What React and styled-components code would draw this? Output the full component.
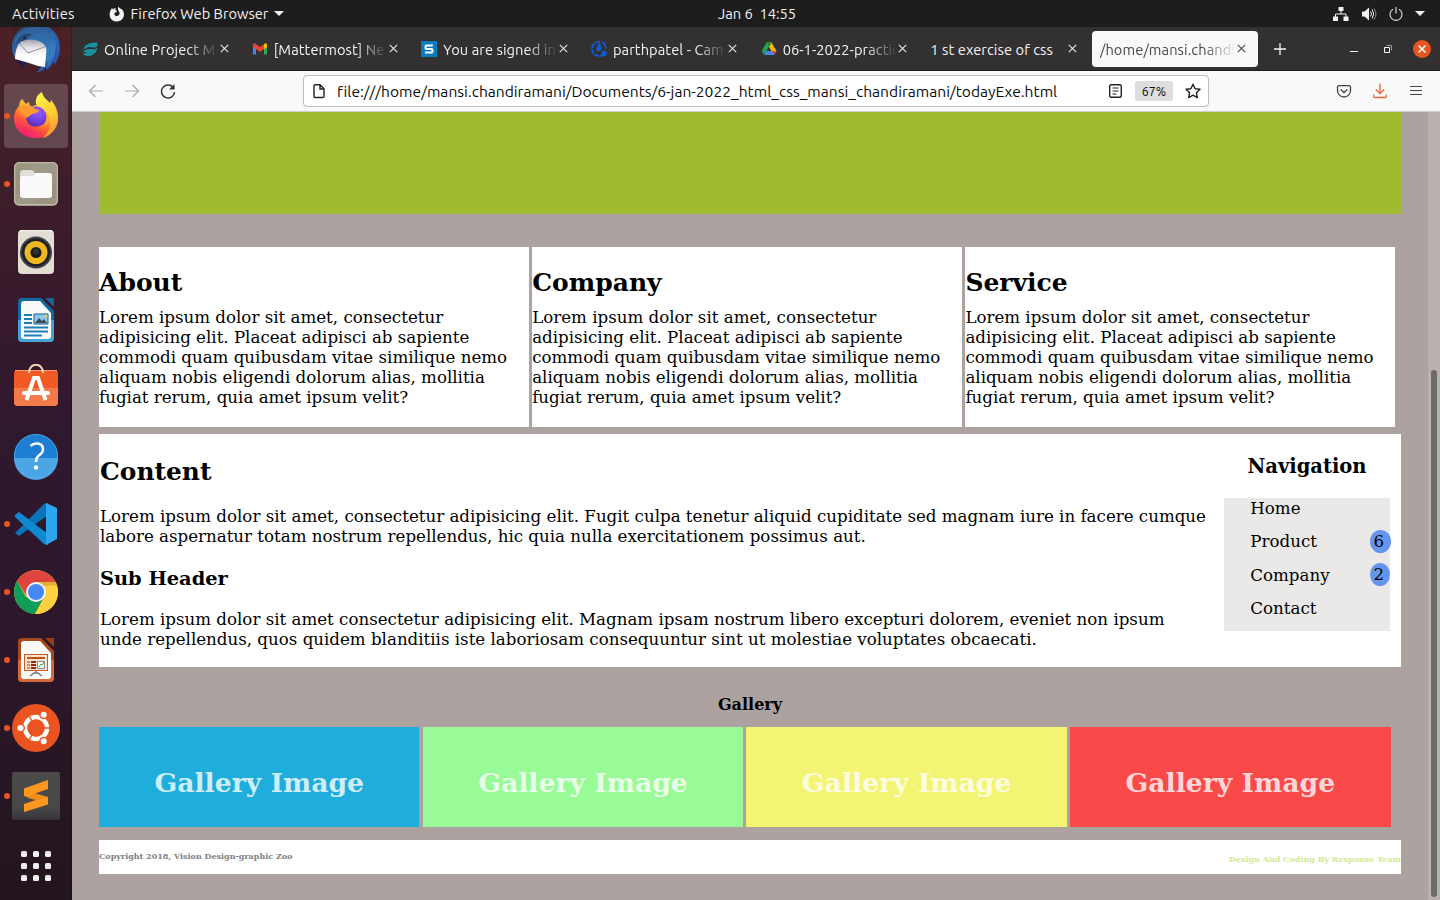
import React from "react";
import styled, { createGlobalStyle } from "styled-components";

const GlobalStyle = createGlobalStyle`
  * { box-sizing: border-box; }
  html, body { margin: 0; padding: 0; }
  body { width: 1440px; height: 900px; overflow: hidden; background: #aca2a0; }
  h1, h2, h3, p, ul { margin: 0; padding: 0; }
  ul { list-style: none; }
`;

const uiFont = `Ubuntu, "Noto Sans", "Open Sans", sans-serif`;
const pageFont = `"DejaVu Serif", serif`;

const Desktop = styled.div`
  display: grid;
  grid-template: 27px 873px / 72px 1368px;
  width: 1440px;
  height: 900px;
  overflow: hidden;
  font-family: ${uiFont};
  font-variant-ligatures: none;
`;

const TopBar = styled.header`
  grid-column: 1 / 3;
  display: grid;
  grid-template-columns: 718px auto 1fr;
  align-items: center;
  background: #1d1d1d;
  color: #f2f2f2;
  font-size: 14.67px;
  line-height: 27px;
  white-space: pre;
`;
const BarGroup = styled.div`
  display: flex;
  align-items: center;
  height: 27px;
  gap: ${(p) => (p.$end ? "12px" : "0")};
  justify-content: ${(p) => (p.$end ? "flex-end" : "flex-start")};
  padding: ${(p) => (p.$end ? "0 15px 0 0" : "0 0 0 12px")};
`;
const Label = styled.span`
  letter-spacing: ${(p) => p.$track || 0}px;
  white-space: pre;
`;
const AppMenu = styled.div`
  display: flex;
  align-items: center;
  gap: 6px;
  margin-left: 34px;
`;

const Dock = styled.nav`
  display: flex;
  flex-direction: column;
  align-items: center;
  overflow: hidden;
  height: 873px;
  background: linear-gradient(180deg, #4b2124 0, #42202a 90px, #3a1b2b 230px, #30182d 400px, #2c172b 600px, #23151e 873px);
  box-shadow: inset -1px 0 0 rgba(0, 0, 0, 0.22);
`;
const DockItem = styled.div`
  position: relative;
  flex: none;
  display: flex;
  align-items: center;
  justify-content: center;
  width: 64px;
  height: 64px;
  margin-bottom: 4px;
  border-radius: 4px;
  background: ${(p) => (p.$active ? "rgba(255,255,255,0.18)" : "transparent")};
  &:first-child { margin-top: -11px; }
  &:last-child { margin-top: 2px; }
  svg { display: block; }
`;
const RunningDot = styled.i`
  position: absolute;
  left: 0;
  top: 29px;
  width: 6px;
  height: 6px;
  border-radius: 50%;
  background: #e95420;
`;

const Browser = styled.main`
  display: grid;
  grid-template-rows: 44px 41px 788px;
  min-width: 0;
`;
const TabStrip = styled.div`
  display: flex;
  align-items: center;
  padding: 0 9px 0 2px;
  background: #333031;
  border-bottom: 1px solid #1f1d1e;
`;
const TabBox = styled.div`
  display: flex;
  align-items: center;
  width: 166px;
  flex: none;
  height: 36px;
  margin-right: 3.67px;
  padding: 0 11.5px 0 8px;
  border-radius: 4px;
  background: ${(p) => (p.$selected ? "#f9f9f9" : "transparent")};
  color: ${(p) => (p.$selected ? "#4a4748" : "#f3f3f3")};
  font-size: 14.67px;
  > svg { flex: none; }
`;
const TabTitle = styled.span`
  flex: 1;
  min-width: 0;
  overflow: hidden;
  white-space: pre;
  line-height: 24px;
  margin: 2px 1px 0 ${(p) => (p.$icon ? 6 : 0)}px;
  letter-spacing: 0.07px;
  mask-image: ${(p) => (p.$fade ? "linear-gradient(to left, transparent 0, black 32px)" : "none")};
`;
const NewTab = styled.div`
  display: flex;
  margin-left: 2px;
`;
const WindowControls = styled.div`
  display: flex;
  align-items: center;
  margin-left: auto;
  gap: 21px;
  svg:first-child { margin-right: 5px; }
`;

const Toolbar = styled.div`
  display: grid;
  grid-template-columns: 231px 906px 1fr;
  align-items: center;
  background: #f9f9f9;
  border-bottom: 1px solid #cfcdce;
`;
const NavButtons = styled.div`
  display: flex;
  gap: 20px;
  padding-left: 16px;
`;
const UrlField = styled.div`
  display: flex;
  align-items: center;
  height: 32px;
  padding: 0 7px 0 7px;
  border: 1px solid #bebdbe;
  border-radius: 4px;
  background: #fff;
  color: #0c0c0d;
  font-size: 15.6px;
`;
const UrlText = styled.span`
  flex: 1;
  margin-left: 10px;
  line-height: 18px;
  white-space: pre;
`;
const ZoomBadge = styled.span`
  width: 38px;
  height: 20px;
  margin: 0 12px;
  border-radius: 3px;
  background: #dedede;
  font-size: 12.4px;
  line-height: 20px;
  text-align: center;
`;
const Tools = styled.div`
  display: flex;
  justify-content: flex-end;
  gap: 20px;
  padding-right: 16px;
`;

const Viewport = styled.section`
  display: grid;
  grid-template-columns: 1356px 12px;
  background: #aca2a0;
  color: #000;
  font-family: ${pageFont};
`;
const Page = styled.div`
  width: 1329px;
  padding-left: 27px;
`;
const Track = styled.div`
  padding: 258px 3px 0;
  background: #bab0b1;
`;
const Thumb = styled.div`
  height: 527px;
  border-radius: 3px;
  background: #6d6c6c;
`;
const Banner = styled.div`
  height: 102px;
  background: #9fbc2e;
`;
const CardRow = styled.div`
  display: flex;
  gap: 3.2px;
  margin-top: 33px;
`;
const Card = styled.article`
  width: 430px;
  height: 180px;
  padding-top: 21px;
  background: #fff;
`;
const Heading = styled.h2`
  font-size: ${(p) => p.$size}px;
  line-height: ${(p) => p.$line}px;
  text-align: ${(p) => p.$align || "left"};
  font-weight: bold;
  white-space: nowrap;
`;
const GalleryHeading = styled(Heading)`
  margin-top: 28px;
`;
const Paragraph = styled.p`
  margin-top: ${(p) => p.$gap}px;
  font-size: 16.67px;
  line-height: 20px;
  white-space: nowrap;
`;
const ContentPanel = styled.div`
  display: flex;
  justify-content: space-between;
  height: 233px;
  margin-top: 7px;
  padding: 0 11px 0 1px;
  background: #fff;
`;
const Article = styled.div`
  padding-top: 23px;
`;
const Aside = styled.aside`
  width: 166px;
  padding-top: 21px;
`;
const NavList = styled.ul`
  height: 133px;
  margin-top: 19px;
  padding-top: 1px;
  background: #eae9e7;
`;
const NavItem = styled.li`
  display: flex;
  justify-content: space-between;
  height: 33.33px;
  padding-left: 26.3px;
  font-size: 16.67px;
  line-height: 20px;
`;
const Count = styled.span`
  width: ${(p) => p.$w}px;
  height: 23px;
  margin: -2.3px ${(p) => 20 - p.$w}px 0 0;
  padding-left: 3.6px;
  border-radius: 50%;
  background: #6495ed;
  line-height: 23px;
`;
const Gallery = styled.div`
  display: flex;
  gap: 3.22px;
  margin-top: 12px;
`;
const Tile = styled.div`
  width: 320.49px;
  height: 100px;
  padding-top: 40px;
  background: ${(p) => p.$color};
  color: rgba(255, 255, 255, 0.8);
`;
const Footer = styled.footer`
  display: flex;
  justify-content: space-between;
  height: 34px;
  margin-top: 13px;
  background: #fff;
  font-size: 8px;
  font-weight: bold;
  line-height: 10px;
`;
const Credit = styled.span`
  padding-top: ${(p) => p.$top}px;
  color: ${(p) => p.$color};
`;

const Svg = ({ w = 16, h, box, children, ...rest }) => (
  <svg width={w} height={h || w} viewBox={box || `0 0 ${w} ${h || w}`} fill="none" {...rest}>{children}</svg>
);

const Thunderbird = () => (
  <Svg w={48}>
    <defs>
      <linearGradient id="tb" x1="0" y1="0" x2="1" y2="1"><stop stopColor="#29517f" /><stop offset=".5" stopColor="#2c6fb6" /><stop offset="1" stopColor="#2b48a8" /></linearGradient>
      <linearGradient id="tbe" x1="0" y1="0" x2="0" y2="1"><stop stopColor="#8d8d95" /><stop offset=".35" stopColor="#e4e4e8" /><stop offset=".6" stopColor="#fff" /></linearGradient>
      <linearGradient id="tbs" x1="0" y1="0" x2="0" y2="1"><stop stopColor="#2a1620" stopOpacity=".5" /><stop offset="1" stopColor="#2a1620" stopOpacity="0" /></linearGradient>
    </defs>
    <path d="M4 32c1 6 3 9 9 12l-2-5 4 2-3-6z" fill="#231957" />
    <path d="M24 0C39 0 48 11 48 24c0 8-3 13-6 17v-4c-3 5-5 8-8 9v-3c-2 3-5 5-9 5l4-5c2-8 3-14 4-20L10 17 3 34C1 31 0 27 0 23 0 10 10 0 24 0z" fill="url(#tb)" />
    <path d="M9 16q8-5 16-1l10 7-2 21q-9-1-16-4L3 35q0-11 6-19z" fill="url(#tbe)" />
    <path d="M7 19l9 10 19-7" stroke="#8e8e96" strokeWidth="1" />
    <path d="M3 17C7 6 15 2 26 3c12 1 19 10 18 21-1 9-4 15-9 20l1-7-3 4c2-7 3-13 1-18-3-6-12-9-20-7-3 0-5 2-7 4z" fill="#3171b4" />
    <path d="M36 22c1 6 0 11-2 15m5-17c1 6 0 11-3 17m6-17c0 7-1 10-3 14" stroke="#4590d2" strokeWidth=".9" />
    <path d="M4 18C7 11 13 8 20 10c-3 2-4 5-9 7-3 0-5 2-7 4z" fill="#274f7d" />
    <circle cx="12.500" cy="14" r="1.300" fill="#12213c" />
    <path d="M0 0h48v18H0z" fill="url(#tbs)" opacity=".5" />
  </Svg>
);
const Firefox = () => (
  <Svg w={48}>
    <defs>
      <linearGradient id="ff" x1=".8" y1="0" x2=".25" y2="1"><stop stopColor="#fff44f" /><stop offset=".35" stopColor="#ffb22d" /><stop offset=".65" stopColor="#ff5a35" /><stop offset="1" stopColor="#f0147a" /></linearGradient>
      <radialGradient id="ffp" cx=".6" cy=".25" r=".8"><stop stopColor="#9c59ff" /><stop offset=".55" stopColor="#7542e5" /><stop offset="1" stopColor="#4b2aa5" /></radialGradient>
      <linearGradient id="fft" x1=".3" y1="0" x2=".7" y2="1"><stop stopColor="#fff34d" /><stop offset=".6" stopColor="#ffc62f" /><stop offset="1" stopColor="#ff8a34" /></linearGradient>
    </defs>
    <path d="M7 14c0-3 1-5 3-7l4 5 3-2c0 2 1 4 3 5 4-3 8-4 11-3 8 2 15 7 15 14 0 12-9 20-22 20S2 38 2 26c0-5 2-9 5-12z" fill="url(#ff)" />
    <path d="M24 12c-1-6 2-10 6-12 1 5 4 7 8 11l1-3c5 6 7 11 7 18 0 9-6 17-15 20 5-5 8-11 7-18-1-8-7-12-14-16z" fill="url(#fft)" />
    <circle cx="24" cy="25" r="10.500" fill="url(#ffp)" />
    <path d="M9 17c3-3 8-4 12-2 1 2 3 3 6 3-1 3-5 3-7 4-3 2-3 3-6 4 1 7 7 10 13 8 5-1 8-4 8-8 3 9-4 16-12 16C13 42 6 35 6 25c0-3 1-6 3-8z" fill="url(#ff)" />
    <path d="M9 16c3-3 8-3 12-1 1 2 3 3 6 3-1 3-5 3-7 4l-6 3c-2-4-3-6-5-9z" fill="#ff9a31" />
  </Svg>
);
const Files = () => (
  <Svg w={48}>
    <rect x="2" y="2" width="44" height="44" rx="5" fill="#9a9481" /><rect x="2.7" y="2.7" width="42.6" height="42" rx="4.5" stroke="#c8c2b1" />
    <path d="M22 3h22v18L20 44H3z" fill="#fff" opacity=".05" />
    <path d="M8 13q0-3 3-3h9l3 3h14q3 0 3 3v8H8z" fill="#e1ded5" />
    <path d="M8 19q0-3 3-3h10l3-3h13q3 0 3 3v19q0 3-3 3H11q-3 0-3-3z" fill="#fafafa" />
  </Svg>
);
const Rhythmbox = () => (
  <Svg w={48}>
    <rect x="6" y="2" width="36" height="44" rx="4" fill="#e2ded3" /><path d="M8 2.5h32" stroke="#f7f5ef" /><circle cx="24" cy="24.5" r="16" fill="#414047" /><circle cx="24" cy="24.5" r="14" fill="#1d2029" /><circle cx="24" cy="24.5" r="11.5" fill="#eeb920" /><circle cx="24" cy="24.5" r="5.5" fill="#1b1b1c" /><circle cx="24" cy="23.500" r="3" fill="#333" />
  </Svg>
);
const Writer = () => (
  <Svg w={48}>
    <path d="M10 2h19l13 13v27q0 4-4 4H10q-4 0-4-4V6q0-4 4-4z" fill="#126aa0" /><path d="M6 24h36v18q0 4-4 4H10q-4 0-4-4z" fill="#45a3d5" />
    <path d="M33 2h9v9z" fill="#126795" /><path d="M9 8q0-3 3-3h16l11 12v23q0 3-3 3H12q-3 0-3-3z" fill="#fafafa" />
    <path d="M12 19h8m-8 4h8m-8 4h8m-8 4.5h24m-24 4h24m-24 4h18" stroke="#1d7eb9" strokeWidth="1.8" />
    <path d="M22 18h14v10H22z" fill="#8cc9ee" stroke="#17618f" /><path d="M23 27l4-5 3 3 2-2 3 4z" fill="#3e4a50" /><circle cx="34" cy="20" r="1.5" fill="#f6ce35" />
  </Svg>
);
const Software = () => (
  <Svg w={48}>
    <rect x="2" y="6" width="44" height="36" rx="4" fill="#f15a24" /><path d="M2 24h44v14q0 4-4 4H6q-4 0-4-4z" fill="#f37b4b" /><path d="M3 6.5h42" stroke="#ff9a70" />
    <path d="M17 9C17-2 31-2 31 9" stroke="#f1d8b3" strokeWidth="2" />
    <path d="M14.500 36l7.500-22h4l7.500 22" stroke="#fff" strokeWidth="4" /><path d="M12 29h24" stroke="#fff" strokeWidth="4" strokeLinecap="round" />
  </Svg>
);
const Help = () => (
  <Svg w={48}>
    <circle cx="24" cy="24" r="22" fill="#1d7fd3" /><path d="M2 26h44a22 22 0 0 1-44 0z" fill="#4ba4e3" /><circle cx="24" cy="24" r="21.5" stroke="#5cb1ec" strokeOpacity=".7" />
    <path d="M18.500 14q2.500-2.500 6-2.500c8 0 8 8 3 11.500-3 2-3.500 3.500-3.500 7" stroke="#fff" strokeWidth="2.600" /><circle cx="24" cy="35.500" r="2.200" fill="#fff" />
  </Svg>
);
const Code = () => (
  <Svg w={48}>
    <path d="M3 33l4 3L36 15V3L32 4z" fill="#0974b9" /><path d="M3 15l4-3 29 22v11l-4-1L3 17z" fill="#1089d2" /><path d="M34 3l11 5v31l-11 6z" fill="#2ba5ee" />
  </Svg>
);
const Chrome = () => (
  <Svg w={48}>
    <circle cx="24" cy="24" r="22" fill="#ffcf3d" />
    <path d="M5 13a22 22 0 0 1 38.500 1H24L14.500 28z" fill="#df453c" /><path d="M5 13a22 22 0 0 0 18 33l9-17-18 0z" fill="#109d59" /><path d="M24 14h19.500A22 22 0 0 1 23 46l10-17z" fill="#ffcf3d" /><path d="M24 14h20l1 3-12 1z" fill="#caa02e" opacity=".6" />
    <circle cx="24" cy="24" r="10" fill="#f3f4f5" /><circle cx="24" cy="24" r="8" fill="#4587f4" />
  </Svg>
);
const Impress = () => (
  <Svg w={48}>
    <path d="M10 2h19l13 13v27q0 4-4 4H10q-4 0-4-4V6q0-4 4-4z" fill="#aa481d" /><path d="M6 24h36v18q0 4-4 4H10q-4 0-4-4z" fill="#d4693b" /><path d="M33 2h9v9z" fill="#993e0d" />
    <path d="M9 8q0-3 3-3h16l11 12v23q0 3-3 3H12q-3 0-3-3z" fill="#fafafa" /><rect x="12.500" y="18.500" width="23" height="16" fill="#f7e5d6" stroke="#c75b24" /><path d="M15 22h18" stroke="#c7520a" strokeWidth="2" /><path d="M15 26h3m-3 3h3m-3 3h3" stroke="#e78351" strokeWidth="2" /><path d="M19 26h5m-5 3h5m-5 3h5" stroke="#8b2b0b" strokeWidth="2" />
    <path d="M25.500 25.500h7v7h-7z" fill="#fff" stroke="#888" /><path d="M27 31l2-3 1 1 2-3" stroke="#2eaa36" /><path d="M24 35v2m-6 3l4-3h4l4 3" stroke="#777" strokeWidth="1.500" />
  </Svg>
);
const Ubuntu = () => (
  <Svg w={48}>
    <circle cx="24" cy="24" r="24" fill="#e95420" /><circle cx="24" cy="24" r="11" stroke="#fff" strokeWidth="4.500" />
    <path d="M24 24l-8 14M24 24l-8-14M24 24h16" stroke="#e95420" strokeWidth="1.500" />
    <g fill="#fff" stroke="#e95420" strokeWidth="1.500"><circle cx="8.500" cy="24" r="3.800" /><circle cx="31.700" cy="10.700" r="3.800" /><circle cx="31.700" cy="37.300" r="3.800" /></g>
    <circle cx="24" cy="24" r="8.500" fill="#e95420" />
  </Svg>
);
const Sublime = () => (
  <Svg w={48}>
    <defs><linearGradient id="sl" x1="0" y1="0" x2="0" y2="1"><stop stopColor="#4a4a4a" /><stop offset=".75" stopColor="#484848" /><stop offset="1" stopColor="#373236" /></linearGradient></defs>
    <rect width="48" height="48" rx="2" fill="url(#sl)" /><path d="M12 16.500l24-8.500v9l-13 4.500L36 25v7.500L12 40v-8l13-4.500-13-3.500z" fill="#ff9820" /><path d="M23 21.500l13 3.500-11 3.500-10-2.500z" fill="#ef8a18" opacity=".8" />
  </Svg>
);
const AppGrid = () => (
  <Svg w={30}>{[0, 12, 24].flatMap((y) => [0, 12, 24].map((x) => <rect key={`${x}-${y}`} x={x} y={y} width="6" height="6" rx="1.500" fill="#f1f0ed" />))}</Svg>
);

const dockItems = [
  [Thunderbird], [Firefox, true, true], [Files, true], [Rhythmbox], [Writer], [Software], [Help],
  [Code, true], [Chrome, true], [Impress, true], [Ubuntu, true], [Sublime, true], [AppGrid],
];

const FoxMono = () => (
  <Svg w={16}><path d="M1.500 4.500L3 2l1 1.500C5 2 6.500 2 7 2c-1 1-1 2 0 2.500l1 .5c0 1-1 1-2 1.500-1 1-1 3 1.500 3.500 2 .2 3.500-1.500 3-3.500C10 5 8 4 9.500.5c1 2 2.500 2 4 3.500C17 9 14 15.500 8 15.500 2 15.500-1 10 1.500 4.500z" fill="#f2f2f2" /></Svg>
);
const Caret = () => <Svg w={10} h={5}><path d="M0 0h10L5 5z" fill="#f2f2f2" /></Svg>;
const Network = () => (
  <Svg w={16} h={14}><path d="M5.500 0h5v4h-5zM0 9.500h5V14H0zM10.500 9.500h5V14h-5z" fill="#f2f2f2" /><path d="M8 3v4M2.500 10V7h10.500v3" stroke="#f2f2f2" /></Svg>
);
const Volume = () => (
  <Svg w={16}><path d="M1 5.500h2.500L8 1.500v13l-4.500-4H1z" fill="#f2f2f2" /><path d="M9.500 5.500q2 2.500 0 5m1.700-7q3 4.500 0 9" stroke="#f2f2f2" /><path d="M13 2.500q4 5.500 0 11" stroke="#8a8a8a" /></Svg>
);
const Power = () => <Svg w={14}><path d="M4 2.200a6 6 0 1 0 6 0M7 0v6.500" stroke="#e6e6e6" strokeWidth="1.100" /></Svg>;
const Cross = ({ color }) => <Svg w={9}><path d="M.8.8l7.400 7.400M8.200.8L.8 8.200" stroke={color} strokeWidth="1.100" /></Svg>;

const Zoho = () => <Svg><path d="M1.500 8C2 4 8 1 15.500 1.500c.5 3-.5 4.500-2.500 5-3 .5-5-1-7-.5-1.500.5-2 2-4.500 2z" fill="#1793a0" /><path d="M.3 10c2 .5 4-2 7-2 3 0 5 .8 8-1C15 11.500 10 15.500 6 15c-2 0-4-1-5-2l4.500-2c-1.500 0-4 .5-5.200-1z" fill="#1793a0" /></Svg>;
const Gmail = () => <Svg><path d="M1 13.500V3.500l3 2.300v7.700z" fill="#4285f4" /><path d="M12 13.500V5.800l3-2.300v10z" fill="#34a853" /><path d="M12 3l1-.6q2-.6 2 1.500v2L12 8z" fill="#fbbc04" /><path d="M1 6V4q0-2.500 2.300-1.400L8 6l4-3v5l-4 3-4-3z" fill="#ea4335" /></Svg>;
const SiteS = () => <Svg><path d="M0 0h16v16H0z" fill="#087cc1" /><path d="M11.800 4.500H5.500q-1 0-1 1V7q0 1 1 1h5q1 0 1 1v1.500q0 1-1 1H4" stroke="#fff" strokeWidth="2" /></Svg>;
const Mattermost = () => <Svg><path d="M9 .8C4 .5 1 4 1 8s3 7 7 7q1.500 0 3-.7" stroke="#1059cf" strokeWidth="2" strokeDasharray="5 1" /><path d="M8.500 1.500c-3 4-5 8-1 9 4 0 4-4 1-9z" fill="#1059cf" /><circle cx="13" cy="12.500" r="2.800" fill="#1059cf" /><path d="M11 1q3.500 1.500 4 6.500" stroke="#1059cf" strokeWidth="1.800" /></Svg>;
const Drive = () => <Svg><path d="M5.500 1.500h5L5.500 10l-2.300 4L.7 10z" fill="#21a35b" /><path d="M5.500 1.500h5L15.500 10h-5z" fill="#ffba00" /><path d="M5.500 1.500h5L8 6z" fill="#118440" /><path d="M5.500 10h10L13 14H3.200z" fill="#4388f5" /><path d="M11 10h4.500L13 14z" fill="#e94335" /></Svg>;

const tabs = [
  { icon: Zoho, title: "Online Project M", fade: true },
  { icon: Gmail, title: "[Mattermost] Ne", fade: true },
  { icon: SiteS, title: "You are signed in", fade: true },
  { icon: Mattermost, title: "parthpatel - Cam", fade: true },
  { icon: Drive, title: "06-1-2022-practic", fade: true },
  { title: "1 st exercise of css" },
  { title: "/home/mansi.chandi", fade: true, selected: true },
];

const Back = () => <Svg><path d="M15 8H1.500M7.500 2L1.500 8l6 6" stroke="#aaa9a9" strokeWidth="1.200" /></Svg>;
const Forward = () => <Svg><path d="M1 8h13.500M8.500 2l6 6-6 6" stroke="#aaa9a9" strokeWidth="1.200" /></Svg>;
const Reload = () => <Svg><path d="M13.800 5.500A6.500 6.500 0 1 0 14.500 9" stroke="#333" strokeWidth="1.400" /><path d="M14.500 1v5.500H9z" fill="#333" /></Svg>;
const FileGlyph = () => <Svg><path d="M3.500 1.700h5.500l4 4v7.600q0 1.200-1.200 1.200H4.200Q3 14.500 3 13.300V2.900q0-1.200 1.200-1.200zM9 2v4h4" stroke="#222" strokeWidth="1.400" /></Svg>;
const Reader = () => <Svg w={14} h={16}><rect x=".7" y="1.700" width="11.600" height="12.600" rx="1.500" stroke="#222" strokeWidth="1.400" /><path d="M3.500 5h6M3.500 8h6M3.500 11h4" stroke="#222" strokeWidth="1.200" /></Svg>;
const Star = () => <Svg><path d="M8 1.200l2.100 4.500 4.900.6-3.600 3.400.9 4.900L8 12.200l-4.300 2.400.9-4.900L1 6.300l4.900-.6z" stroke="#222" strokeWidth="1.400" strokeLinejoin="round" /></Svg>;
const Pocket = () => <Svg><path d="M2.700 2.700h10.600q1.200 0 1.200 1.200v3.600a6.500 6.500 0 0 1-13 0V3.900q0-1.200 1.200-1.200z" stroke="#444" strokeWidth="1.300" /><path d="M4.800 6.500L8 9.500l3.200-3" stroke="#444" strokeWidth="1.400" /></Svg>;
const Download = () => <Svg><path d="M8 .5v10M3.800 6.500L8 10.700l4.200-4.200M1.700 11.500v1.800q0 1.200 1.200 1.200h10.200q1.200 0 1.200-1.200v-1.800" stroke="#e9643b" strokeWidth="1.300" /></Svg>;
const MenuLines = () => <Svg><path d="M2 3.500h12M2 7.500h12M2 11.500h12" stroke="#444" strokeWidth="1.200" /></Svg>;

const BlurbLines = () => (
  <Paragraph $gap={10}>
    Lorem ipsum dolor sit amet, consectetur<br />
    adipisicing elit. Placeat adipisci ab sapiente<br />
    commodi quam quibusdam vitae similique nemo<br />
    aliquam nobis eligendi dolorum alias, mollitia<br />
    fugiat rerum, quia amet ipsum velit?
  </Paragraph>
);

export default function App() {
  return (
    <>
      <GlobalStyle />
      <Desktop>
        <TopBar>
          <BarGroup>
            <Label $track={0.25}>Activities</Label>
            <AppMenu><FoxMono /><Label>Firefox Web Browser</Label><Caret /></AppMenu>
          </BarGroup>
          <Label>Jan 6  14:55</Label>
          <BarGroup $end>
            <Network /><Volume /><Power /><Caret />
          </BarGroup>
        </TopBar>
        <Dock>
          {dockItems.map(([Icon, running, active], i) => (
            <DockItem key={i} $active={active}>{running && <RunningDot />}<Icon /></DockItem>
          ))}
        </Dock>
        <Browser>
          <TabStrip>
            {tabs.map(({ icon: Icon, title, fade, selected }) => (
              <TabBox key={title} $selected={selected}>
                {Icon && <Icon />}
                <TabTitle $icon={!!Icon} $fade={fade}>{title}</TabTitle>
                <Cross color={selected ? "#4a4748" : "#e8e8e8"} />
              </TabBox>
            ))}
            <NewTab><Svg w={32} h={36}><path d="M16 12v12M10 18h12" stroke="#f3f3f3" strokeWidth="1.300" /></Svg></NewTab>
            <WindowControls>
              <Svg w={8} h={8}><path d="M0 6.500h8" stroke="#f3f3f3" /></Svg>
              <Svg w={8} h={8}><path d="M.5 2.500h5v5h-5z" stroke="#fff" /><path d="M2.500.5h5v5" stroke="#9b999a" /></Svg>
              <Svg w={18}><circle cx="9" cy="9" r="9" fill="#e95420" /><path d="M5.500 5.500l7 7m0-7l-7 7" stroke="#fff" strokeWidth="1.500" /></Svg>
            </WindowControls>
          </TabStrip>
          <Toolbar>
            <NavButtons><Back /><Forward /><Reload /></NavButtons>
            <UrlField>
              <FileGlyph />
              <UrlText>file:///home/mansi.chandiramani/Documents/6-jan-2022_html_css_mansi_chandiramani/todayExe.html</UrlText>
              <Reader /><ZoomBadge>67%</ZoomBadge><Star />
            </UrlField>
            <Tools><Pocket /><Download /><MenuLines /></Tools>
          </Toolbar>
          <Viewport>
            <Page>
              <Banner />
              <CardRow>
                {["About", "Company", "Service"].map((name) => (
                  <Card key={name}><Heading $size={25} $line={30}>{name}</Heading><BlurbLines /></Card>
                ))}
              </CardRow>
              <ContentPanel>
                <Article>
                  <Heading $size={24.9} $line={30}>Content</Heading>
                  <Paragraph $gap={20}>
                    Lorem ipsum dolor sit amet, consectetur adipisicing elit. Fugit culpa tenetur aliquid cupiditate sed magnam iure in facere cumque<br />
                    labore aspernatur totam nostrum repellendus, hic quia nulla exercitationem possimus aut.
                  </Paragraph>
                  <Heading $size={19.4} $line={64}>Sub Header</Heading>
                  <Paragraph $gap={-1}>
                    Lorem ipsum dolor sit amet consectetur adipisicing elit. Magnam ipsam nostrum libero excepturi dolorem, eveniet non ipsum<br />
                    unde repellendus, quos quidem blanditiis iste laboriosam consequuntur sint ut molestiae voluptates obcaecati.
                  </Paragraph>
                </Article>
                <Aside>
                  <Heading $size={19.5} $line={24} $align="center">Navigation</Heading>
                  <NavList>
                    <NavItem>Home</NavItem>
                    <NavItem>Product<Count $w={21}>6</Count></NavItem>
                    <NavItem>Company<Count $w={20}>2</Count></NavItem>
                    <NavItem>Contact</NavItem>
                  </NavList>
                </Aside>
              </ContentPanel>
              <GalleryHeading as="h3" $size={16} $line={20} $align="center">Gallery</GalleryHeading>
              <Gallery>
                {["#1faedb", "#98fb98", "#f3f474", "#f94949"].map((color) => (
                  <Tile key={color} $color={color}><Heading $size={26.67} $line={32} $align="center">Gallery Image</Heading></Tile>
                ))}
              </Gallery>
              <Footer>
                <Credit $top={11} $color="#808080">Copyright 2018, Vision Design-graphic Zoo</Credit>
                <Credit $top={14} $color="#cfea95">Design And Coding By Response Team</Credit>
              </Footer>
            </Page>
            <Track><Thumb /></Track>
          </Viewport>
        </Browser>
      </Desktop>
    </>
  );
}
